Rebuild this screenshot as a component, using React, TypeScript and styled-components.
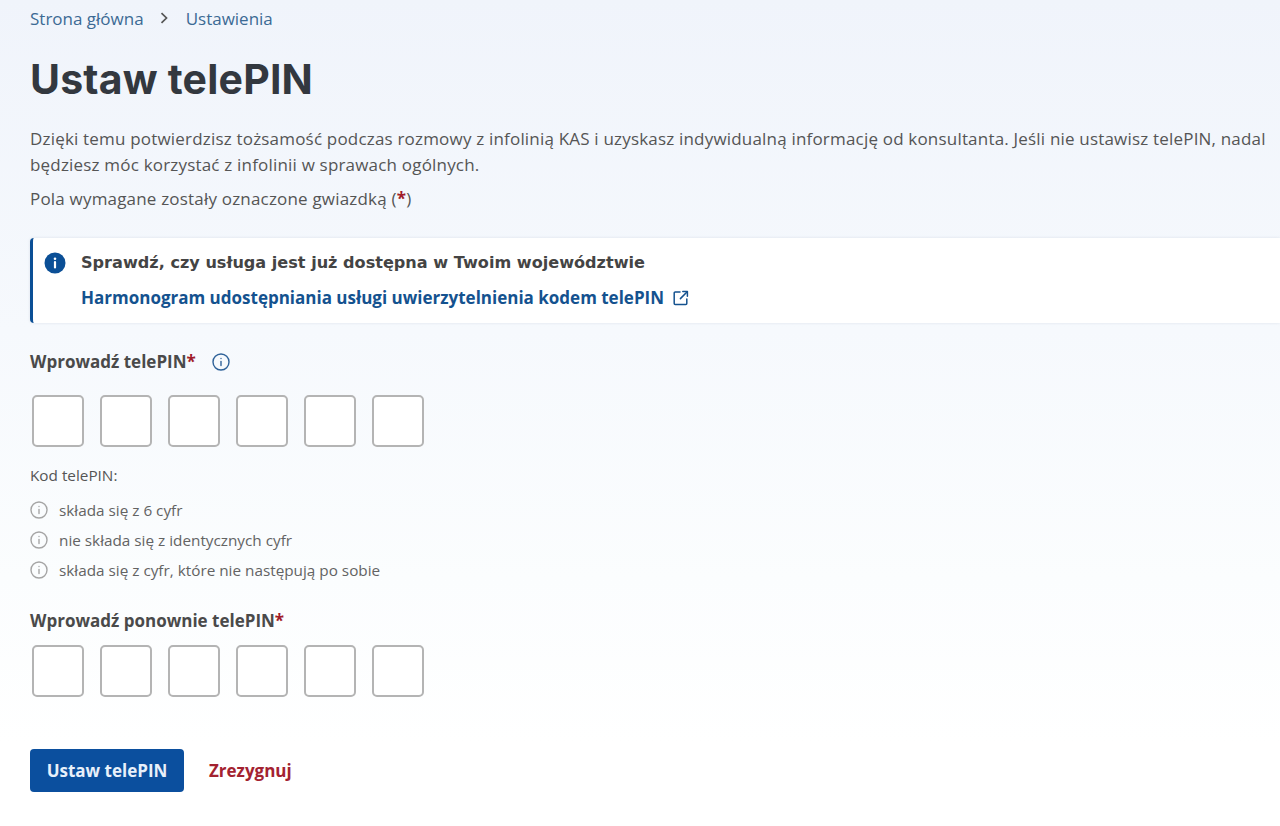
import styled, { createGlobalStyle } from "styled-components";

const GlobalStyle = createGlobalStyle`
    html, body {
        margin: 0;
        padding: 0;
    }
    body {
        font-family: "Open Sans", "Liberation Sans", sans-serif;
        color: #4a4a4a;
        overflow: hidden;
    }
`;

const Page = styled.div`
    width: 1280px;
    height: 826px;
    box-sizing: border-box;
    padding: 8px 0 0 30px;
    background: linear-gradient(180deg, #f0f4fb 0%, #f6f9fd 40%, #fbfdfe 70%, #ffffff 90%);
    overflow: hidden;
`;

const Breadcrumbs = styled.nav`
    display: flex;
    align-items: center;
    height: 20px;
    font-size: 17px;
    color: #3c6a94;
`;

const Chevron = styled.svg`
    width: 12px;
    height: 12px;
    margin: 0 16px 0 14px;
`;

const Title = styled.h1`
    margin: 28px 0 0;
    font-family: Inter, "Liberation Sans", sans-serif;
    font-size: 41px;
    line-height: 46px;
    font-weight: 700;
    letter-spacing: 0.2px;
    color: #33383f;
    white-space: nowrap;
`;

const Lead = styled.p`
    margin: 24px 0 0;
    width: 1250px;
    font-size: 17px;
    line-height: 26px;
    letter-spacing: 0.19px;
    color: #555;
    white-space: nowrap;
`;

const Note = styled.p`
    margin: 8px 0 0;
    font-size: 17px;
    line-height: 26px;
    letter-spacing: 0.19px;
    color: #555;
`;

const Required = styled.span`
    color: #a01c2a;
    font-weight: 700;
`;

const Notice = styled.section`
    display: flex;
    gap: 15px;
    margin-top: 26px;
    height: 85px;
    box-sizing: border-box;
    padding: 14px 0 0 11px;
    background: #fff;
    border-left: 3px solid #0b4f96;
    border-radius: 4px 0 0 4px;
    box-shadow: 0 0 3px rgba(120, 135, 155, 0.2);
`;

const NoticeBody = styled.div`
    display: flex;
    flex-direction: column;
    gap: 13px;
`;

const NoticeTitle = styled.div`
    font-family: "DejaVu Sans", "Liberation Sans", sans-serif;
    font-size: 16.1px;
    line-height: 22px;
    font-weight: 700;
    color: #444;
    white-space: nowrap;
`;

const NoticeLink = styled.a`
    display: flex;
    align-items: center;
    gap: 9px;
    font-size: 17px;
    line-height: 22px;
    font-weight: 700;
    color: #14528f;
`;

const FieldLabel = styled.div<{ $top: number }>`
    display: flex;
    align-items: center;
    gap: 16px;
    margin-top: ${({ $top }) => $top}px;
    font-size: 17px;
    line-height: 22px;
    font-weight: 700;
    color: #4a4a4a;
`;

const PinRow = styled.div<{ $top: number }>`
    display: flex;
    gap: 16px;
    margin: ${({ $top }) => $top}px 0 0 2px;
`;

const PinBox = styled.input`
    width: 52px;
    height: 52px;
    box-sizing: border-box;
    padding: 0;
    background: #fff;
    border: 2px solid #b4b4b4;
    border-radius: 5px;
`;

const HintTitle = styled.div`
    margin-top: 18px;
    font-size: 15.3px;
    line-height: 20px;
    color: #555;
`;

const HintList = styled.ul`
    display: flex;
    flex-direction: column;
    gap: 10px;
    margin: 15px 0 0;
    padding: 0;
    list-style: none;
`;

const Hint = styled.li`
    display: flex;
    align-items: center;
    gap: 11px;
    height: 20px;
    font-size: 15.3px;
    color: #636363;
`;

const Actions = styled.div`
    display: flex;
    align-items: center;
    gap: 25px;
    margin-top: 52px;
`;

const SubmitButton = styled.button`
    width: 154px;
    height: 43px;
    padding: 0;
    border: 0;
    border-radius: 4px;
    background: #0b4f9e;
    color: #e8f0fa;
    font-family: inherit;
    font-size: 17px;
    font-weight: 700;
`;

const CancelLink = styled.a`
    font-size: 17px;
    font-weight: 700;
    color: #a32230;
`;

const InfoOutline = ({ size, color }: { size: number; color: string }) => (
    <svg width={size} height={size} viewBox="0 0 18 18" fill="none" stroke={color} strokeWidth="1.4" strokeLinecap="round">
        <circle cx="9" cy="9" r="8" />
        <path d="M9 8.4v4.2" />
        <path d="M9 5.4v.2" />
    </svg>
);

const InfoFilled = () => (
    <svg width="22" height="22" viewBox="0 0 22 22">
        <circle cx="11" cy="11" r="10.5" fill="#0b4f96" />
        <path d="M11 10v5.4" stroke="#fff" strokeWidth="2.2" strokeLinecap="round" />
        <circle cx="11" cy="6.8" r="1.3" fill="#fff" />
    </svg>
);

const ExternalIcon = () => (
    <svg width="16" height="16" viewBox="0 0 16 16" fill="none" stroke="#14528f" strokeWidth="1.5" strokeLinecap="round" strokeLinejoin="round">
        <path d="M7 2H2.2a1 1 0 0 0-1 1v10.6a1 1 0 0 0 1 1h10.6a1 1 0 0 0 1-1V9" />
        <path d="M9.8 1.6h4.6v4.6" />
        <path d="M14.2 1.8 7.4 8.6" />
    </svg>
);

const PinInputs = ({ top }: { top: number }) => (
    <PinRow $top={top}>
        {[0, 1, 2, 3, 4, 5].map((i) => (
            <PinBox key={i} maxLength={1} aria-label={`Cyfra ${i + 1}`} />
        ))}
    </PinRow>
);

const hints = [
    "składa się z 6 cyfr",
    "nie składa się z identycznych cyfr",
    "składa się z cyfr, które nie następują po sobie",
];

const App = () => (
    <Page>
        <GlobalStyle />
        <Breadcrumbs>
            <span>Strona główna</span>
            <Chevron viewBox="0 0 12 12" fill="none" stroke="#555" strokeWidth="1.7">
                <path d="M3.5 1.2 8.5 6l-5 4.8" />
            </Chevron>
            <span>Ustawienia</span>
        </Breadcrumbs>
        <Title>Ustaw telePIN</Title>
        <Lead>
            Dzięki temu potwierdzisz tożsamość podczas rozmowy z infolinią KAS i uzyskasz indywidualną informację od konsultanta. Jeśli nie ustawisz telePIN, nadal
            <br />
            będziesz móc korzystać z infolinii w sprawach ogólnych.
        </Lead>
        <Note>
            Pola wymagane zostały oznaczone gwiazdką (<Required>*</Required>)
        </Note>
        <Notice>
            <InfoFilled />
            <NoticeBody>
                <NoticeTitle>Sprawdź, czy usługa jest już dostępna w Twoim województwie</NoticeTitle>
                <NoticeLink>
                    Harmonogram udostępniania usługi uwierzytelnienia kodem telePIN
                    <ExternalIcon />
                </NoticeLink>
            </NoticeBody>
        </Notice>
        <FieldLabel $top={28}>
            <span>
                Wprowadź telePIN<Required>*</Required>
            </span>
            <InfoOutline size={18} color="#2f6299" />
        </FieldLabel>
        <PinInputs top={22} />
        <HintTitle>Kod telePIN:</HintTitle>
        <HintList>
            {hints.map((hint) => (
                <Hint key={hint}>
                    <InfoOutline size={18} color="#a5a5a5" />
                    {hint}
                </Hint>
            ))}
        </HintList>
        <FieldLabel $top={30}>
            <span>
                Wprowadź ponownie telePIN<Required>*</Required>
            </span>
        </FieldLabel>
        <PinInputs top={13} />
        <Actions>
            <SubmitButton>Ustaw telePIN</SubmitButton>
            <CancelLink>Zrezygnuj</CancelLink>
        </Actions>
    </Page>
);

export default App;
